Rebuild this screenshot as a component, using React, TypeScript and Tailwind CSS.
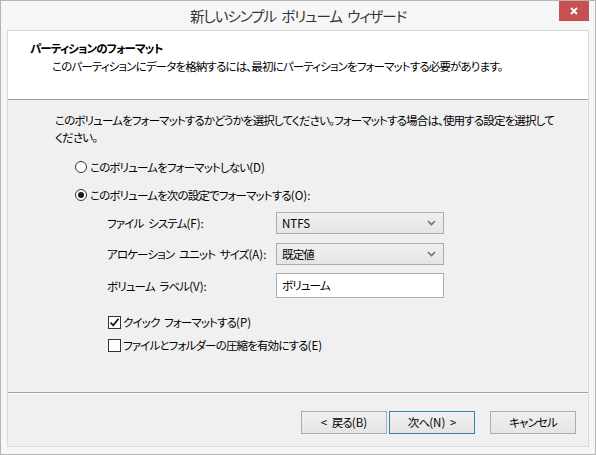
import React from "react";

const jp = "font-['Meiryo_UI','Noto_Sans_CJK_JP',sans-serif] [font-feature-settings:'palt']";

// ascii runs keep normal spacing; kana get the tight tracking
function T({ s }: { s: string }) {
  const parts = s.split(/([\x20-\x7e]+)/);
  return (
    <>
      {parts.map((p, i) =>
        /^[\x20-\x7e]+$/.test(p) ? (
          <span key={i} className="tracking-[0px] [word-spacing:2px]">
            {p}
          </span>
        ) : (
          <React.Fragment key={i}>{p}</React.Fragment>
        )
      )}
    </>
  );
}

function Radio({ checked, label }: { checked?: boolean; label: string }) {
  return (
    <div className="flex items-center h-[20px]">
      <span className="w-[12px] h-[12px] rounded-full border border-[#333333] bg-white flex items-center justify-center">
        {checked && <span className="w-[6px] h-[6px] rounded-full bg-[#1a1a1a]" />}
      </span>
      <span className="ml-[3px]">
        <T s={label} />
      </span>
    </div>
  );
}

function Check({ checked, label }: { checked?: boolean; label: string }) {
  return (
    <div className="flex items-center h-[20px]">
      <span className="w-[13px] h-[13px] border border-[#333333] bg-white flex items-center justify-center">
        {checked && (
          <svg width="11" height="11" viewBox="0 0 11 11">
            <path d="M1.5 5.5 L4.2 8.3 L9.5 1.8" fill="none" stroke="#1a1a1a" strokeWidth="1.8" />
          </svg>
        )}
      </span>
      <span className="ml-[2px]">
        <T s={label} />
      </span>
    </div>
  );
}

function Select({ value }: { value: string }) {
  return (
    <div className="w-[168px] h-[22px] border border-[#acacac] bg-gradient-to-b from-[#f0f0f0] to-[#e5e5e5] flex items-center justify-between pl-[5px] pr-[7px]">
      <span>
        <T s={value} />
      </span>
      <svg width="9" height="6" viewBox="0 0 9 6">
        <path d="M1 1 L4.5 4.5 L8 1" fill="none" stroke="#707070" strokeWidth="1.6" />
      </svg>
    </div>
  );
}

function Btn({ label, focus }: { label: string; focus?: boolean }) {
  return (
    <div
      className={
        "w-[86px] h-[23px] flex items-center justify-center border bg-gradient-to-b from-[#f0f0f0] to-[#e5e5e5] " +
        (focus ? "border-[#3c7fb1]" : "border-[#acacac]")
      }
    >
      <span>
        <T s={label} />
      </span>
    </div>
  );
}

export default function App() {
  return (
    <div
      className={
        "w-[596px] h-[455px] bg-[#f6f6f6] border border-[#b5b5b5] flex flex-col text-[11.5px] tracking-[-0.85px] text-black " +
        jp
      }
    >
      <div className="h-[29px] flex items-start">
        <div className="w-[36px]" />
        <div className="flex-1 text-center pt-[5px] text-[14.5px] tracking-[-1px] text-[#333333] leading-[20px] [word-spacing:3px]">
          新しいシンプル ボリューム ウィザード
        </div>
        <div className="w-[30px] h-[20px] mr-[6px] bg-[#c75050] flex items-center justify-center">
          <svg width="8" height="8" viewBox="0 0 8 8">
            <path d="M1 1 L7 7 M7 1 L1 7" stroke="#ffffff" strokeWidth="1.8" />
          </svg>
        </div>
      </div>

      <div className="mx-[6px] mb-[7px] flex-1 border border-[#d9d9d9] flex flex-col">
        <div className="h-[69px] bg-white border-b border-[#a0a0a0] pt-[9px] pl-[22px] leading-[17px]">
          <div className="font-bold">パーティションのフォーマット</div>
          <div className="pl-[22px] mt-[1px]">
            このパーティションにデータを格納するには、最初にパーティションをフォーマットする必要があります。
          </div>
        </div>

        <div className="flex-1 bg-[#f0f0f0] pt-[12px] pl-[47px] leading-[17px]">
          <p>
            このボリュームをフォーマットするかどうかを選択してください。フォーマットする場合は、使用する設定を選択して
            <br />
            ください。
          </p>
          <div className="ml-[20px] mt-[11px]">
            <Radio label="このボリュームをフォーマットしない(D)" />
          </div>
          <div className="ml-[20px] mt-[8px]">
            <Radio checked label="このボリュームを次の設定でフォーマットする(O):" />
          </div>
          <div className="ml-[52px] mt-[7px] grid grid-cols-[169px_168px] gap-y-[9px] items-center">
            <span>
              <T s="ファイル システム(F):" />
            </span>
            <Select value="NTFS" />
            <span>
              <T s="アロケーション ユニット サイズ(A):" />
            </span>
            <Select value="既定値" />
            <span>
              <T s="ボリューム ラベル(V):" />
            </span>
            <div className="w-[168px] h-[25px] border border-[#abadb3] bg-white flex items-center pl-[5px] -mt-[1px]">
              ボリューム
            </div>
          </div>
          <div className="ml-[53px] mt-[14px]">
            <Check checked label="クイック フォーマットする(P)" />
          </div>
          <div className="ml-[53px] mt-[3px]">
            <Check label="ファイルとフォルダーの圧縮を有効にする(E)" />
          </div>
        </div>

        <div className="h-[54px] bg-[#f0f0f0] border-t border-[#a0a0a0] shadow-[inset_0_1px_0_#ffffff] flex justify-end items-start pt-[18px] pr-[12px]">
          <Btn label="< 戻る(B)" />
          <div className="ml-[2px]">
            <Btn focus label="次へ(N) >" />
          </div>
          <div className="ml-[15px]">
            <Btn label="キャンセル" />
          </div>
        </div>
      </div>
    </div>
  );
}
